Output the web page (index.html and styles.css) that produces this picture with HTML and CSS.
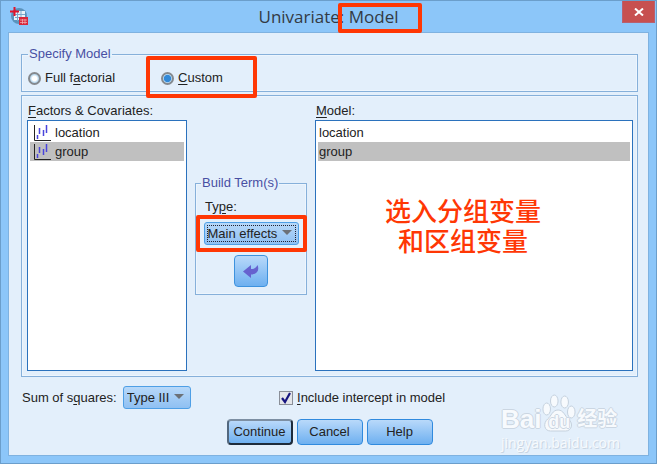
FILE: index.html
```html
<!DOCTYPE html>
<html lang="en">
<head>
    <meta charset="UTF-8">
    <meta name="viewport" content="width=device-width, initial-scale=1.0">
    <title>Univariate: Model</title>
    <link rel="stylesheet" href="styles.css">
</head>
<body>
    <div class="window">
        <div class="titlebar">
            <svg class="app-icon" width="18" height="18" viewBox="0 0 18 18">
                <circle cx="9" cy="9" r="8" fill="#5b93bd"/>
                <path d="M5 4h10v9H4V9z" fill="#e8f2fa"/>
                <path d="M5 7.500h10M5 10.500h10M7.500 4v10M11 4v10" stroke="#7ba9cc" stroke-width="1"/>
                <path d="M4.500 0v9M0 4.500h9" stroke="#e0142c" stroke-width="2"/>
                <path d="M9 10h9v8H9z" fill="#d8283c"/>
                <path d="M10 13h7M10 15.500h7M12.500 12v5M15 12v5" stroke="#f3b3ba" stroke-width="0.700"/>
            </svg>
            <h1 class="title">Univariate: <span class="marked mark-title">Model</span></h1>
            <button class="close-btn" type="button" aria-label="Close">
                <svg width="10" height="8" viewBox="0 0 10 8"><path d="M1 0.500l8 7M9 0.500l-8 7" stroke="#fff" stroke-width="2"/></svg>
            </button>
        </div>

        <form class="content">
            <fieldset class="group specify">
                <legend>Specify Model</legend>
                <label class="radio"><input type="radio" name="model"><span>Full f<u>a</u>ctorial</span></label>
                <label class="radio marked mark-custom"><input type="radio" name="model" checked><span><u>C</u>ustom</span></label>
            </fieldset>

            <div class="terms">
                <div class="column">
                    <div class="list-label" id="factorsLabel"><u>F</u>actors &amp; Covariates:</div>
                    <ul class="list" role="listbox" aria-labelledby="factorsLabel">
                        <li role="option">
                            <svg class="var-icon" width="18" height="18" viewBox="0 0 18 18"><path d="M1.500 1v15.500H18" fill="none" stroke="#222" stroke-width="1"/><path d="M4.500 11v4M6.500 4v6M10.500 6v6M13.500 1v8" stroke="#4a45dc" stroke-width="1.500"/></svg>
                            location
                        </li>
                        <li class="selected" role="option" aria-selected="true">
                            <svg class="var-icon" width="18" height="18" viewBox="0 0 18 18"><path d="M1.500 1v15.500H18" fill="none" stroke="#222" stroke-width="1"/><path d="M4.500 11v4M6.500 4v6M10.500 6v6M13.500 1v8" stroke="#4a45dc" stroke-width="1.500"/></svg>
                            group
                        </li>
                    </ul>
                </div>

                <fieldset class="group build">
                    <legend>Build Term(s)</legend>
                    <label class="type-label" for="termType">Ty<u>p</u>e:</label>
                    <div class="dropdown marked mark-type">
                        <select class="focused" id="termType">
                            <option>Main effects</option>
                            <option>Interaction</option>
                        </select>
                    </div>
                    <button class="move-btn" type="button" aria-label="Move term">
                        <svg width="16" height="15" viewBox="0 0 16 15"><path d="M0 7.500L8 1v4c3 0 5-1 6.500-4C17 7 13 10.500 8 10.500V14z" fill="#6662cf"/></svg>
                    </button>
                </fieldset>

                <div class="column">
                    <div class="list-label" id="modelLabel"><u>M</u>odel:</div>
                    <ul class="list model-list" role="listbox" aria-labelledby="modelLabel">
                        <li role="option">location</li>
                        <li class="selected" role="option" aria-selected="true">group</li>
                    </ul>
                    <p class="note" lang="zh">选入分组变量<br>和区组变量</p>
                </div>
            </div>

            <div class="options">
                <div class="squares">
                    <label for="squares">Sum of s<u>q</u>uares:</label>
                    <div class="dropdown">
                        <select id="squares">
                            <option>Type III</option>
                            <option>Type I</option>
                        </select>
                    </div>
                </div>
                <label class="check"><input type="checkbox" checked><span><u>I</u>nclude intercept in model</span></label>
            </div>

            <div class="actions">
                <button class="btn default" type="button">Continue</button>
                <button class="btn" type="button">Cancel</button>
                <button class="btn" type="button">Help</button>
            </div>
        </form>

        <div class="watermark">
            <div class="brand">
                <span>Bai</span>
                <span class="paw">
                    <svg width="34" height="38" viewBox="0 0 36 38" preserveAspectRatio="none">
                        <g fill="#f7fafd" stroke="#c3cfdc" stroke-width="1">
                            <ellipse cx="5" cy="15" rx="4" ry="6"/>
                            <ellipse cx="13" cy="7" rx="4" ry="6"/>
                            <ellipse cx="24" cy="8" rx="4" ry="6"/>
                            <ellipse cx="31" cy="18" rx="4" ry="6"/>
                            <path d="M17 16c6 0 7 6 11 9 6 5 3 12-3 12H9C2 37 1 29 6 25c4-3 5-9 11-9z"/>
                        </g>
                    </svg>
                    <span class="du">du</span>
                </span>
                <span class="jingyan" lang="zh">经验</span>
            </div>
            <div class="site">jingyan.baidu.com</div>
        </div>
    </div>
</body>
</html>
```
FILE: styles.css
```css
* {
    box-sizing: border-box;
}

body {
    margin: 0;
    min-height: 100vh;
    display: flex;
    flex-direction: column;
    padding-bottom: 1px;
    background: #fff;
    color: #222;
    font-family: "Liberation Sans", "Noto Sans CJK SC", sans-serif;
    font-size: 13px;
    line-height: 16px;
}

.window {
    position: relative;
    flex: 1;
    display: flex;
    flex-direction: column;
    padding: 0 7px 7px;
    background: #8cc6f9;
    border: 1px solid #6b9ecb;
}

/* title bar */
.titlebar {
    display: grid;
    grid-template-columns: 46px 1fr 46px;
    height: 31px;
}

.app-icon {
    margin: 6px 0 0 2px;
}

.title {
    margin: 0;
    text-align: center;
    font-family: "Open Sans", sans-serif;
    font-size: 17px;
    font-weight: 400;
    line-height: 31px;
    color: #333a44;
}

.close-btn {
    display: flex;
    align-items: center;
    justify-content: center;
    justify-self: end;
    width: 33px;
    height: 22px;
    margin-right: -6px;
    padding: 0;
    border: 1px solid #b8606f;
    border-top: none;
    background: #c75050;
}

.content {
    flex: 1;
    display: flex;
    flex-direction: column;
    padding: 13px 10px 10px 12px;
    background: #e3effb;
    border: 1px solid #7fb2e0;
}

.group {
    min-width: 0;
    margin: 0;
    border: 1px solid #86b0da;
    box-shadow: inset 0 0 0 1px #edf5fd;
}

.group legend {
    padding: 0 1px;
    color: #484fa3;
}

u {
    text-underline-offset: 2px;
}

.specify {
    display: flex;
    gap: 46px;
    padding: 8px 6px 5px;
}

.radio,
.check {
    display: flex;
    align-items: center;
    gap: 4px;
}

.radio input {
    appearance: none;
    width: 13px;
    height: 13px;
    margin: 0;
    border: 2px solid #85898e;
    border-radius: 50%;
    background: radial-gradient(circle, #fff 35%, #b8d8ee 65%);
}

.radio input:checked {
    background: radial-gradient(circle, #3189d8 50%, #b8dcf7 65%);
}

/* factors, term builder and model lists */
.terms {
    flex: 1;
    display: grid;
    grid-template-columns: 160px 112px 1fr;
    gap: 8px;
    margin-top: 3px;
    padding: 7px 4px 5px 5px;
    border: 1px solid #86b0da;
    box-shadow: inset 0 0 0 1px #edf5fd;
}

.column {
    position: relative;
    display: flex;
    flex-direction: column;
}

.list-label {
    padding-left: 1px;
    margin-bottom: 1px;
}

.list {
    flex: 1;
    margin: 0;
    padding: 2px;
    list-style: none;
    background: #fff;
    border: 1px solid #2b72bd;
}

.list li {
    display: flex;
    align-items: center;
    gap: 4px;
    height: 19px;
    padding-left: 3px;
}

.model-list li {
    padding-left: 1px;
}

.list .selected {
    background: #c0c0c0;
}

.build {
    align-self: start;
    display: flex;
    flex-direction: column;
    align-items: center;
    margin-top: 72px;
    padding: 8px 5px 7px;
}

.type-label {
    align-self: flex-start;
    margin-bottom: 7px;
    padding-left: 4px;
}

.dropdown {
    position: relative;
}

.dropdown select {
    appearance: none;
    display: block;
    height: 23px;
    padding: 0 20px 0 3px;
    border: 1px solid #4e9fe6;
    border-radius: 3px;
    background: linear-gradient(#b7d8f9, #8fc0f2);
    color: #222;
    font: inherit;
}

.dropdown select.focused {
    outline: 1px dotted #223;
    outline-offset: -4px;
}

.dropdown::before {
    content: "";
    position: absolute;
    top: 8px;
    right: 7px;
    border: 5px solid transparent;
    border-top-color: #6c7177;
    border-bottom: none;
}

.move-btn {
    display: flex;
    align-items: center;
    justify-content: center;
    width: 34px;
    height: 32px;
    margin-top: 10px;
    padding: 0;
    border: 1px solid #3d92de;
    border-radius: 4px;
    background: linear-gradient(#b9d9fa, #6eb0f0);
}

/* red callouts */
.marked {
    position: relative;
}

.marked::after {
    content: "";
    position: absolute;
    border: 4px solid #ff3704;
    border-radius: 2px;
    pointer-events: none;
}

.mark-title::after {
    inset: -2px -23px -5px -11px;
}

.mark-custom::after {
    inset: -14px -34px -12px -15px;
}

.mark-type::after {
    inset: -7px -8px;
}

.note {
    position: absolute;
    top: 94px;
    left: 0;
    right: 22px;
    margin: 0;
    text-align: center;
    color: #ff3704;
    font-family: "Liberation Sans", "Noto Sans CJK SC", sans-serif;
    font-size: 26px;
    font-weight: 500;
    line-height: 30px;
}

/* bottom controls */
.options {
    display: grid;
    grid-template-columns: 258px 1fr;
    align-items: center;
    margin-top: 9px;
}

.squares {
    display: flex;
    align-items: center;
    gap: 6px;
    padding-left: 1px;
}

.check input {
    appearance: none;
    width: 14px;
    height: 14px;
    margin: 0;
    border: 1px solid #8a8f98;
    background: #e4e6ea;
}

.check input:checked {
    background: #e4e6ea url("data:image/svg+xml,%3Csvg xmlns='http://www.w3.org/2000/svg' viewBox='0 0 12 12'%3E%3Cpath d='M2 6l3 4 5-9' fill='none' stroke='%23171580' stroke-width='2.2'/%3E%3C/svg%3E") center / 12px 12px no-repeat;
}

.actions {
    display: flex;
    justify-content: center;
    gap: 4px;
    margin-top: 10px;
}

.btn {
    width: 66px;
    height: 26px;
    padding: 0;
    border: 1px solid #308ade;
    border-radius: 4px;
    background: linear-gradient(#b9d9fa, #6eb0f0);
    color: #222;
    font: inherit;
}

.btn.default {
    border: 2px solid #1d2b3b;
    border-top-color: #7d8fa3;
    border-left-color: #52677e;
}

.watermark {
    position: absolute;
    right: 36px;
    bottom: 11px;
    color: #f7fafd;
    text-shadow: 1px 0 #cbd6e2, -1px 0 #cbd6e2, 0 1px #cbd6e2, 0 -1px #cbd6e2;
}

.brand {
    display: flex;
    align-items: flex-end;
    gap: 1px;
    margin-bottom: 2px;
    font-size: 26px;
    font-weight: 700;
    line-height: 26px;
}

.paw {
    position: relative;
    height: 38px;
}

.paw svg {
    display: block;
}

.du {
    position: absolute;
    left: 0;
    right: 0;
    bottom: 0;
    text-align: center;
    font-size: 18px;
    line-height: 20px;
}

.jingyan {
    font-size: 20px;
}

.site {
    font-family: "Open Sans", sans-serif;
    font-size: 14px;
    line-height: 18px;
    text-shadow: 1px 1px #c9d5e2;
}
```
